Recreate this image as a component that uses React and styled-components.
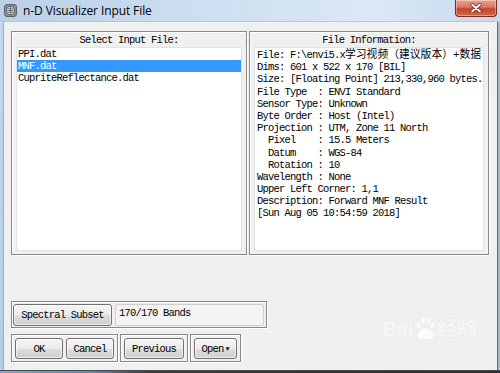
import React from "react";
import styled, { createGlobalStyle } from "styled-components";

const GlobalStyle = createGlobalStyle`
  html, body {
    margin: 0;
    padding: 0;
    width: 500px;
    height: 373px;
    overflow: hidden;
    background: #3a3a3a;
  }
`;

const MONO = `"Liberation Mono", "Noto Sans CJK SC", monospace`;

// Text shown in the right-hand information box
const infoLines = [
  ["File: F:\\envi5.x", "学习视频（建议版本）+数据"],
  ["Dims: 601 x 522 x 170 [BIL]"],
  ["Size: [Floating Point] 213,330,960 bytes."],
  ["File Type  : ENVI Standard"],
  ["Sensor Type: Unknown"],
  ["Byte Order : Host (Intel)"],
  ["Projection : UTM, Zone 11 North"],
  ["  Pixel    : 15.5 Meters"],
  ["  Datum    : WGS-84"],
  ["  Rotation : 10"],
  ["Wavelength : None"],
  ["Upper Left Corner: 1,1"],
  ["Description: Forward MNF Result"],
  ["[Sun Aug 05 10:54:59 2018]"],
];

const files = ["PPI.dat", "MNF.dat", "CupriteReflectance.dat"];

function App() {
  return (
    <Window>
      <GlobalStyle />
      <TitleBar>
        <AppIcon>
          <svg width="13" height="13" viewBox="0 0 13 13">
            <rect x="0.5" y="0.5" width="12" height="12" rx="2.5" fill="#8a8f96" stroke="#5d6269" />
            <circle cx="6.5" cy="6.5" r="4.2" fill="#d9dde2" stroke="#4c5158" strokeWidth="0.8" />
            <path d="M2.6 6.5h7.8M6.5 2.4v8.2M3.5 4.3c2 1 4 1 6 0M3.5 8.7c2-1 4-1 6 0" stroke="#4c5158" strokeWidth="0.7" fill="none" />
          </svg>
        </AppIcon>
        <Title>n-D Visualizer Input File</Title>
        <CloseButton>
          <svg width="12" height="10" viewBox="0 0 12 10">
            <path d="M2 1.5l8 7M10 1.5l-8 7" stroke="#5a1810" strokeWidth="3.4" strokeLinecap="round" />
            <path d="M2 1.5l8 7M10 1.5l-8 7" stroke="#fff" strokeWidth="2" strokeLinecap="round" />
          </svg>
        </CloseButton>
      </TitleBar>
      <Body>
        <SideFrame />
        <Client>
          <PanelRow>
            <Panel $width={236}>
              <PanelLabel>Select Input File:</PanelLabel>
              <ListBox>
                {files.map((f) => (
                  <ListItem key={f} $selected={f === "MNF.dat"}>
                    {f}
                  </ListItem>
                ))}
              </ListBox>
            </Panel>
            <Panel $width={240}>
              <PanelLabel>File Information:</PanelLabel>
              <InfoBox>
                {infoLines.map(([ascii, cjk], i) => (
                  <InfoLine key={i}>
                    {ascii}
                    {cjk && <Cjk>{cjk}</Cjk>}
                  </InfoLine>
                ))}
              </InfoBox>
            </Panel>
          </PanelRow>

          <SubsetRow>
            <DlgButton $width={99} $height={22}>Spectral Subset</DlgButton>
            <BandField>170/170 Bands</BandField>
          </SubsetRow>

          <ButtonRow>
            <Group>
              <DlgButton $width={48}>OK</DlgButton>
              <DlgButton $width={48}>Cancel</DlgButton>
            </Group>
            <Group>
              <DlgButton $width={60}>Previous</DlgButton>
            </Group>
            <Group>
              <DlgButton $width={43}>
                Open<Caret>▼</Caret>
              </DlgButton>
            </Group>
          </ButtonRow>

          <Watermark>
            <WmTop>
              Bai
              <Paw>
                <svg width="22" height="24" viewBox="0 0 22 24">
                  <g fill="rgba(255,255,255,0.8)" stroke="rgba(0,0,0,0.06)" strokeWidth="0.6">
                    <ellipse cx="4.5" cy="9" rx="2.3" ry="2.9" />
                    <ellipse cx="9" cy="4.5" rx="2.4" ry="3" />
                    <ellipse cx="14.5" cy="4.5" rx="2.4" ry="3" />
                    <ellipse cx="18.5" cy="9" rx="2.3" ry="2.9" />
                    <path d="M3 21c0-5 4-9 8.5-9S20 16 20 21c0 2-2 2.5-8.5 2.5S3 23 3 21z" />
                  </g>
                </svg>
              </Paw>
              经验
            </WmTop>
            <WmUrl>jingyan.baidu.com</WmUrl>
          </Watermark>
        </Client>
        <RightFrame />
      </Body>
      <DesktopEdge />
    </Window>
  );
}

const Window = styled.div`
  width: 500px;
  height: 373px;
  display: flex;
  flex-direction: column;
`;

const TitleBar = styled.div`
  height: 22px;
  flex: none;
  display: flex;
  align-items: center;
  position: relative;
  background: linear-gradient(90deg, #b9d0e9 0%, #cfe0f2 45%, #dbe8f6 75%, #c6d9ee 100%);
  border-bottom: 1px solid #b4c8dd;
  box-sizing: border-box;
`;

const AppIcon = styled.div`
  width: 13px;
  height: 13px;
  margin: 0 6px 0 4px;
  display: flex;
`;

const Title = styled.span`
  font-family: "Open Sans", "Noto Sans", sans-serif;
  font-size: 12px;
  letter-spacing: -0.1px;
  color: #000;
`;

const CloseButton = styled.div`
  position: absolute;
  top: 0;
  right: 3px;
  width: 42px;
  height: 17px;
  box-sizing: border-box;
  border: 1px solid #7d2a20;
  border-top: none;
  border-radius: 0 0 4px 4px;
  background: linear-gradient(#e8a593 0%, #d8765f 45%, #c4462e 55%, #d26a47 100%);
  box-shadow: inset 0 0 0 1px rgba(255, 255, 255, 0.35);
  display: flex;
  align-items: center;
  justify-content: center;
`;

const Body = styled.div`
  flex: 1;
  display: flex;
`;

const SideFrame = styled.div`
  width: 3px;
  background: linear-gradient(#c4d8ee, #b4cde8);
`;

const RightFrame = styled.div`
  width: 3px;
  background: #aab9c9;
  border-left: 1px solid #626b75;
  box-sizing: border-box;
`;

const Client = styled.div`
  flex: 1;
  position: relative;
  background: #f0f0f0;
  border-left: 1px solid #9aacbf;
  box-sizing: border-box;
  padding: 9px 0 0 7px;
  font-family: ${MONO};
  font-size: 10.5px;
  letter-spacing: -0.8px;
  color: #000;
`;

const PanelRow = styled.div`
  display: flex;
  gap: 2px;
  height: 224px;
`;

const Panel = styled.div`
  width: ${(p) => p.$width}px;
  box-sizing: border-box;
  border: 1px solid #888;
  box-shadow: inset 1px 1px 0 #fff, 1px 1px 0 #fff;
  padding: 0 4px 3px 4px;
  display: flex;
  flex-direction: column;
`;

const PanelLabel = styled.div`
  height: 15px;
  line-height: 17px;
  text-align: center;
  flex: none;
`;

const ListBox = styled.div`
  flex: 1;
  background: #fff;
  border: 1px solid #e2e2e2;
`;

const ListItem = styled.div`
  height: 12px;
  line-height: 12px;
  padding-left: 1px;
  white-space: pre;
  background: ${(p) => (p.$selected ? "#3399ff" : "transparent")};
  color: ${(p) => (p.$selected ? "#fff" : "#000")};
`;

const InfoBox = styled.div`
  flex: 1;
  background: #fff;
  border: 1px solid #e2e2e2;
  padding: 1px 0 0 2px;
  overflow: hidden;
`;

const InfoLine = styled.div`
  height: 12.2px;
  line-height: 12.2px;
  white-space: pre;
`;

const Cjk = styled.span`
  font-size: 10.8px;
  letter-spacing: 0;
`;

const SubsetRow = styled.div`
  margin-top: 46px;
  width: 256px;
  height: 27px;
  box-sizing: border-box;
  border: 1px solid #888;
  box-shadow: inset 1px 1px 0 #fff, 1px 1px 0 #fff;
  padding: 2px 2px 1px 1px;
  display: flex;
  gap: 3px;
`;

const DlgButton = styled.div`
  width: ${(p) => p.$width}px;
  height: ${(p) => p.$height || 21}px;
  box-sizing: border-box;
  border: 1px solid #707070;
  border-radius: 3px;
  background: linear-gradient(#f6f6f6 0%, #ebebeb 50%, #dddddd 51%, #cfcfcf 100%);
  box-shadow: inset 0 0 0 1px rgba(255, 255, 255, 0.6);
  display: flex;
  align-items: center;
  justify-content: center;
  white-space: pre;
`;

const BandField = styled.div`
  flex: 1;
  box-sizing: border-box;
  border: 1px solid #cfcfcf;
  border-radius: 2px;
  background: #f4f4f4;
  padding: 2px 0 0 3px;
  line-height: 12px;
`;

const ButtonRow = styled.div`
  margin-top: 6px;
  display: flex;
  gap: 2px;
`;

const Group = styled.div`
  height: 28px;
  box-sizing: border-box;
  border: 1px solid #888;
  box-shadow: inset 1px 1px 0 #fff, 1px 1px 0 #fff;
  padding: 3px 3px 0 3px;
  display: flex;
  gap: 3px;
`;

const Caret = styled.span`
  font-size: 7px;
  margin-left: 2px;
  letter-spacing: 0;
  color: #222;
`;

const Watermark = styled.div`
  position: absolute;
  left: 378px;
  top: 294px;
  display: flex;
  flex-direction: column;
  align-items: center;
  color: rgba(255, 255, 255, 0.75);
  text-shadow: 0 0 1px rgba(0, 0, 0, 0.08);
  letter-spacing: 0;
`;

const WmTop = styled.div`
  display: flex;
  align-items: flex-end;
  font-family: "Liberation Sans", "Noto Sans CJK SC", sans-serif;
  font-size: 20px;
  font-weight: bold;
  line-height: 22px;
`;

const Paw = styled.span`
  width: 22px;
  height: 24px;
  margin: 0 1px;
  display: flex;
`;

const WmUrl = styled.div`
  font-family: "Liberation Serif", serif;
  font-size: 10px;
  margin-top: 2px;
`;

const DesktopEdge = styled.div`
  height: 3px;
  flex: none;
  border-top: 1px solid #4a4a4a;
  box-sizing: border-box;
  background: linear-gradient(90deg, #7fa9d4 0%, #5d88b8 18%, #3b3b3b 30%, #2e2e2e 100%);
`;

export default App;
